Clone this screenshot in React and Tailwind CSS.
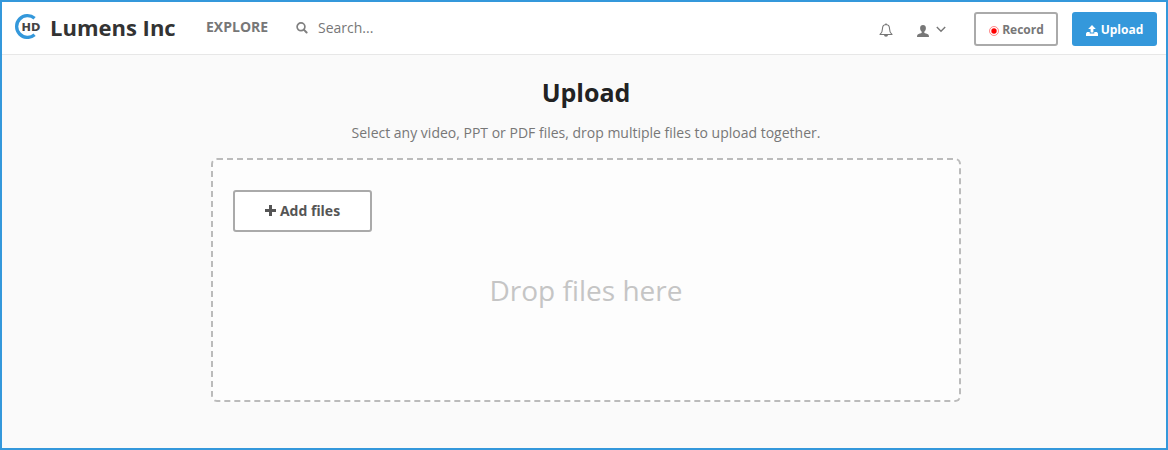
import React from "react";

function Logo() {
  return (
    <svg className="mb-1 h-[26px] w-[27px] shrink-0" viewBox="14 13 27 26">
      <path d="M34.6 18.2A10.9 10.9 0 1 0 34.6 34.8" fill="none" stroke="#3498db" strokeWidth="3.3" />
      <text x="21.6" y="30.6" fontFamily="DejaVu Sans, sans-serif" fontWeight="700" fontSize="11.2" textLength="18.8" lengthAdjust="spacingAndGlyphs" fill="#444">HD</text>
    </svg>
  );
}

function SearchIcon() {
  return (
    <svg className="mb-px h-3 w-3 shrink-0" viewBox="0 0 12 12" fill="none" stroke="#808080">
      <circle cx="5" cy="4.8" r="3.9" strokeWidth="1.7" />
      <path d="M7.8 7.6l2.8 2.9" strokeWidth="2" strokeLinecap="round" />
    </svg>
  );
}

function BellIcon() {
  return (
    <svg className="h-[15px] w-[14px] shrink-0" viewBox="0 0 14 15">
      <path d="M7 1.5C4.6 1.7 3.5 3.3 3.5 5.4C3.5 8.5 2.8 10 1 11.5H13C11.2 10 10.5 8.5 10.5 5.4C10.5 3.3 9.4 1.7 7 1.5Z" fill="none" stroke="#777" strokeWidth="1.1" strokeLinejoin="round" />
      <path d="M6.3 .4h1.4v1.4H6.3zM5 12h4a2 1.8 0 0 1-4 0z" fill="#777" />
    </svg>
  );
}

function UserIcon() {
  return (
    <svg className="mt-px h-3 w-3 shrink-0" viewBox="0 0 12 12" fill="#777">
      <path d="M6 0C7.8 0 8.9 1.1 8.9 3.1C8.9 4.8 8.2 6 7.3 6.7V7.8C7.6 8.3 10.4 8.8 11.3 9.6C11.8 10 12 10.8 12 12H0C0 10.8.2 10 .7 9.6C1.6 8.8 4.4 8.3 4.7 7.8V6.7C3.8 6 3.1 4.8 3.1 3.1C3.1 1.1 4.2 0 6 0Z" />
    </svg>
  );
}

function ChevronIcon() {
  return (
    <svg className="mb-[2px] h-[7px] w-[10px] shrink-0" viewBox="0 0 10 7">
      <path d="M.8 1.1L5 5.3L9.2 1.1" fill="none" stroke="#777" strokeWidth="1.4" />
    </svg>
  );
}

function RecordIcon() {
  return (
    <svg className="mt-[2px] h-[10px] w-[10px] shrink-0" viewBox="0 0 10 10">
      <circle cx="5" cy="5" r="4.5" fill="none" stroke="#f00" strokeOpacity=".65" strokeWidth=".7" />
      <circle cx="5" cy="5" r="2.7" fill="#f00" />
    </svg>
  );
}

function UploadIcon() {
  return (
    <svg className="mt-px h-[11px] w-[12px] shrink-0" viewBox="0 0 12 11" fill="#fff">
      <path d="M6 0L9.8 4.1H7.4V7.6H4.6V4.1H2.2Z" />
      <path d="M1 7H3.7V8.6H8.3V7H11L12 8.4V11H0V8.4Z" />
    </svg>
  );
}

function PlusIcon() {
  return (
    <svg className="mb-px h-[11px] w-[11px] shrink-0" viewBox="0 0 11 11" fill="#555">
      <path d="M4 0h3v4h4v3H7v4H4V7H0V4h4z" />
    </svg>
  );
}

export default function App() {
  return (
    <div className="flex h-[450px] w-[1168px] flex-col border-2 border-[#3498db] bg-[#fafafa] font-['Open_Sans',sans-serif] text-[#777]">
      <header className="flex h-[53px] shrink-0 items-center border-b border-[#e7e7e7] bg-white pr-[9px] pl-3">
        <Logo />
        <div className="mb-[2px] ml-[9px] w-[156px] text-[22px] leading-8 font-bold whitespace-nowrap text-[#333]">Lumens Inc</div>
        <nav className="mb-[2px] w-[90px] text-sm leading-5 font-bold">EXPLORE</nav>
        <SearchIcon />
        <div className="ml-[10px] text-sm leading-5">Search...</div>
        <div className="ml-auto flex items-center pt-[2px]">
          <div className="flex items-center pt-[2px]">
            <BellIcon />
            <div className="ml-6 flex items-center gap-[7px]">
              <UserIcon />
              <ChevronIcon />
            </div>
          </div>
          <button className="ml-7 flex h-[34px] w-[84px] items-center justify-center gap-[3px] rounded-[3px] border-2 border-[#aaa] bg-white pt-[2px] pl-px text-xs font-bold">
            <RecordIcon />
            Record
          </button>
          <button className="ml-[14px] flex h-[34px] w-[85px] items-center justify-center gap-[3px] rounded-[3px] bg-[#3498db] pt-[2px] text-xs font-bold text-white">
            <UploadIcon />
            Upload
          </button>
        </div>
      </header>
      <main className="ml-[209px] flex w-[750px] flex-col items-center pt-[21px]">
        <h1 className="text-[25px] leading-8 font-bold text-[#222]">Upload</h1>
        <p className="mt-[15px] text-sm leading-5 whitespace-nowrap">Select any video, PPT or PDF files, drop multiple files to upload together.</p>
        <section className="mt-[15px] flex h-[244px] w-[750px] flex-col rounded-[6px] border-2 border-dashed border-[#bbb] bg-[#fdfdfd] px-5 pt-[30px]">
          <button className="flex h-[42px] w-[139px] items-center justify-center gap-[4px] rounded-[3px] border-2 border-[#aaa] bg-white text-sm font-bold text-[#555]">
            <PlusIcon />
            Add files
          </button>
          <div className="mt-[38px] text-center text-[28px] leading-10 text-[#c5c5c5]">Drop files here</div>
        </section>
      </main>
    </div>
  );
}
